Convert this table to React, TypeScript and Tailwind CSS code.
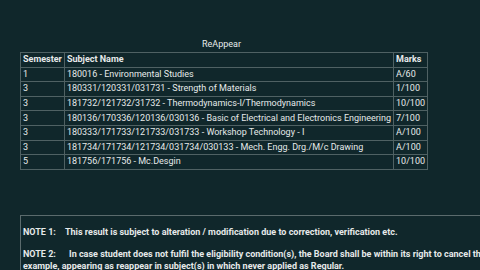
const rows = [
  ['1', '180016 - Environmental Studies', 'A/60'],
  ['3', '180331/120331/031731 - Strength of Materials', '1/100'],
  ['3', '181732/121732/31732 - Thermodynamics-I/Thermodynamics', '10/100'],
  ['3', '180136/170336/120136/030136 - Basic of Electrical and Electronics Engineering', '7/100'],
  ['3', '180333/171733/121733/031733 - Workshop Technology - I', 'A/100'],
  ['3', '181734/171734/121734/031734/030133 - Mech. Engg. Drg./M/c Drawing', 'A/100'],
  ['5', '181756/171756 - Mc.Desgin', '10/100'],
];

const cell = 'border border-[#4f6163] px-[2px] h-[14.6px] leading-none whitespace-nowrap text-left align-middle';

export default function App() {
  return (
    <div className="w-[480px] h-[270px] overflow-hidden bg-[#10272b] text-[#e6eaea] font-['Roboto',sans-serif] text-[9px]">
      <div className="pt-[40px] pl-[20px]">
        <div className="w-[403px] text-center leading-none h-[12px]">ReAppear</div>
        <table className="border-collapse border border-[#4f6163] w-[403px]">
          <thead>
            <tr>
              <th className={`${cell} w-[41px] font-bold`}>Semester</th>
              <th className={`${cell} font-bold`}>Subject Name</th>
              <th className={`${cell} w-[32px] font-bold`}>Marks</th>
            </tr>
          </thead>
          <tbody>
            {rows.map((r, i) => (
              <tr key={i}>
                <td className={cell}>{r[0]}</td>
                <td className={cell}>{r[1]}</td>
                <td className={cell}>{r[2]}</td>
              </tr>
            ))}
          </tbody>
        </table>
      </div>

      {/* notes box */}
      <div className="mt-[45px] ml-[20px] border-t border-l border-[#5b6b6d] pt-[10px] pl-[2px] font-bold whitespace-nowrap leading-[12px]">
        <p className="flex">
          <span className="w-[42px] shrink-0">NOTE 1:</span>
          <span>This result is subject to alteration / modification due to correction, verification etc.</span>
        </p>
        <p className="flex mt-[10px]">
          <span className="w-[46px] shrink-0">NOTE 2:</span>
          <span>In case student does not fulfil the eligibility condition(s), the Board shall be within its right to cancel the</span>
        </p>
        <p>example, appearing as reappear in subject(s) in which never applied as Regular.</p>
      </div>
    </div>
  );
}
